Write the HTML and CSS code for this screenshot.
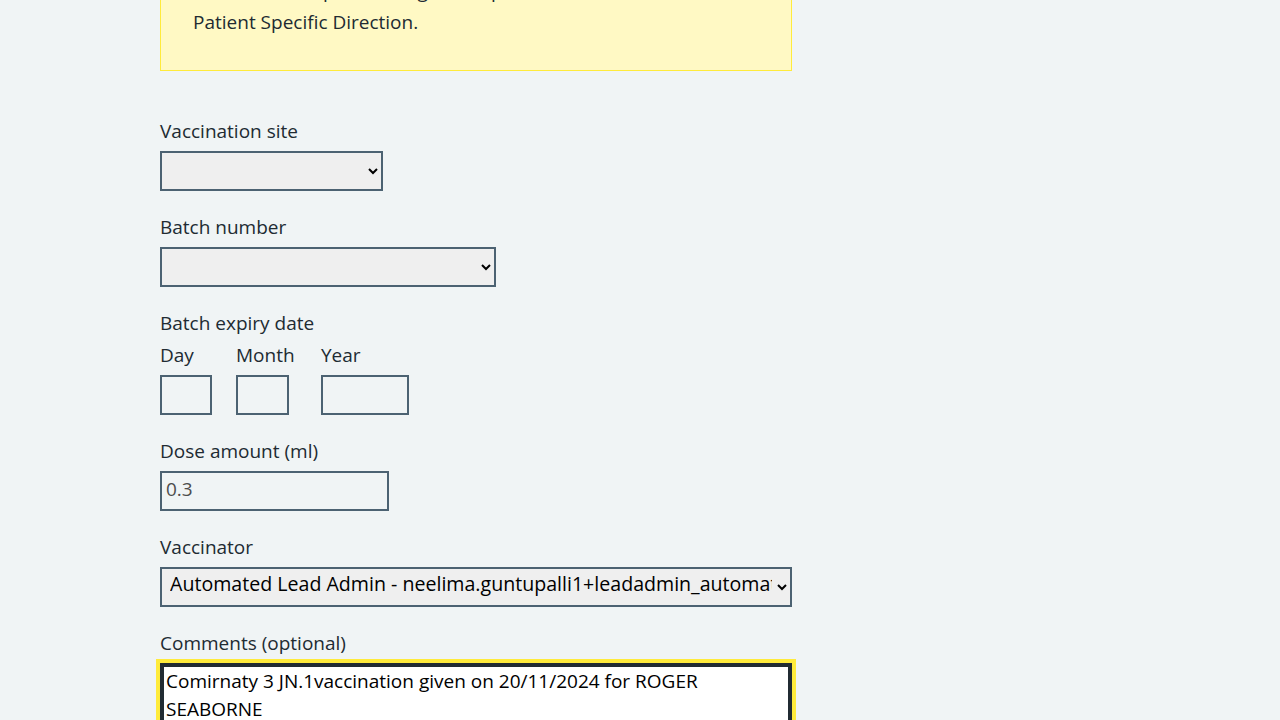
FILE: index.html
```html
<!DOCTYPE html>
<html lang="en">
<head>
<meta charset="utf-8">
<title>Record vaccination</title>
<link rel="stylesheet" href="styles.css">
</head>
<body>
<div class="container">
  <main class="column">
    <div class="callout">
      <p>This vaccine is provided against a personal direction or a Patient Specific Direction.</p>
    </div>

    <form class="form">
      <div class="form-group">
        <label class="label" for="site">Vaccination site</label>
        <select class="select select--site" id="site"><option></option></select>
      </div>

      <div class="form-group">
        <label class="label" for="batch">Batch number</label>
        <select class="select select--batch" id="batch"><option></option></select>
      </div>

      <div class="form-group">
        <fieldset class="fieldset">
          <legend class="label">Batch expiry date</legend>
          <div class="date-input">
            <div class="date-item date-item--day">
              <label class="label" for="day">Day</label>
              <input class="input input--day" id="day" type="text">
            </div>
            <div class="date-item date-item--month">
              <label class="label" for="month">Month</label>
              <input class="input input--month" id="month" type="text">
            </div>
            <div class="date-item date-item--year">
              <label class="label" for="year">Year</label>
              <input class="input input--year" id="year" type="text">
            </div>
          </div>
        </fieldset>
      </div>

      <div class="form-group">
        <label class="label" for="dose">Dose amount (ml)</label>
        <input class="input input--dose" id="dose" type="text" value="0.3">
      </div>

      <div class="form-group">
        <label class="label" for="vaccinator">Vaccinator</label>
        <select class="select select--full" id="vaccinator"><option>Automated Lead Admin - neelima.guntupalli1+leadadmin_automation@nhs.net</option></select>
      </div>

      <div class="form-group">
        <label class="label" for="comments">Comments (optional)</label>
        <textarea class="textarea" id="comments" rows="5">Comirnaty 3 JN.1vaccination given on 20/11/2024 for ROGER SEABORNE</textarea>
      </div>
    </form>
  </main>
</div>
</body>
</html>
```
FILE: styles.css
```css
html, body {
  margin: 0;
  padding: 0;
  background: #f0f4f5;
}

body {
  font-family: "Open Sans", "Liberation Sans", sans-serif;
  font-size: 19px;
  color: #212b32;
}

.container {
  width: 960px;
  margin: 0 auto;
}

.column {
  width: 632px;
}

.callout {
  margin-top: -52px;
  margin-bottom: 48px;
  background: #fff9c4;
  border: 1px solid #ffeb3b;
  padding: 32px 32px 27px 32px;
}

.callout p {
  margin: 0;
  line-height: 31px;
  position: relative;
  top: -5px;
}

.form-group {
  margin-bottom: 24px;
}

.label {
  display: block;
  line-height: 22px;
  padding: 1px 0 5px 0;
  margin-bottom: 4px;
  color: #212b32;
}

.fieldset {
  border: 0;
  margin: 0;
  padding: 0;
  min-width: 0;
}

.fieldset legend {
  padding: 1px 0 5px 0;
}

.select {
  display: block;
  box-sizing: border-box;
  height: 40px;
  font-family: "Open Sans", "Liberation Sans", sans-serif;
  font-size: 19px;
  color: #000;
  background-color: #efefef;
  border: 2px solid #4c6272;
  border-radius: 0;
  padding: 0 2px 7px 4px;
  margin: 0;
}

.select--site { width: 223px; }
.select--batch { width: 336px; }
.select--full { width: 632px; padding-right: 2px; font-size: 19.6px; }

.date-input {
  display: flex;
}

.date-item {
  margin-right: 24px;
}

.date-item--month { width: 61px; }

.input {
  display: block;
  box-sizing: border-box;
  height: 40px;
  margin: 0;
  padding: 0 4px 4px 4px;
  font-family: "Open Sans", "Liberation Sans", sans-serif;
  font-size: 19px;
  color: #4d4d4d;
  background: #f0f4f5;
  border: 2px solid #4c6272;
  border-radius: 0;
}

.input--day { width: 52px; margin-top: 1px; }
.input--month { width: 53px; margin-top: 1px; }
.input--year { width: 88px; margin-top: 1px; }
.input--dose { width: 229px; }

.textarea {
  display: block;
  box-sizing: border-box;
  width: 632px;
  min-height: 150px;
  margin: 0;
  padding: 2px 4px 4px 4px;
  font-family: "Open Sans", "Liberation Sans", sans-serif;
  font-size: 19px;
  line-height: 28px;
  color: #000;
  background: #fff;
  border: 2px solid #212b32;
  border-radius: 0;
  box-shadow: inset 0 0 0 2px #212b32;
  outline: 4px solid #ffeb3b;
  outline-offset: 0;
  resize: vertical;
}
```
